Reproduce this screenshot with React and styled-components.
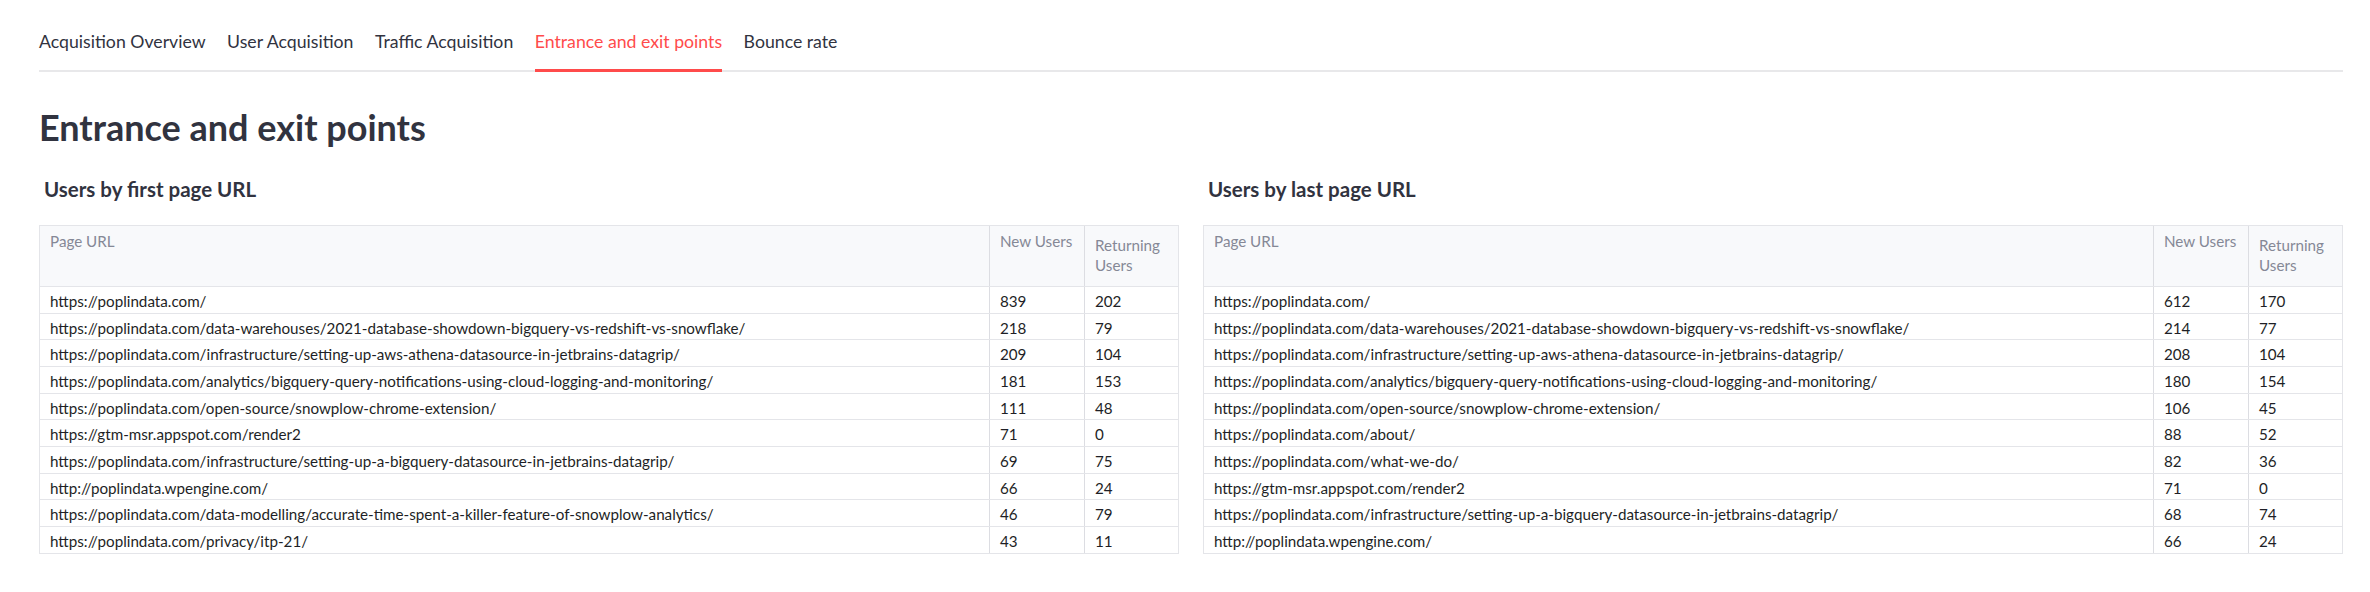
import React from 'react';
import styled, { createGlobalStyle } from 'styled-components';

const GlobalStyle = createGlobalStyle`
  html, body {
    margin: 0;
    padding: 0;
    background: #ffffff;
  }
  body {
    font-family: "Source Sans Pro", Lato, "Noto Sans", sans-serif;
    color: #31333f;
  }
  * {
    box-sizing: border-box;
  }
`;

const Page = styled.div`
  padding: 30px 27px 0 39px;
`;

const TabList = styled.div`
  display: flex;
  gap: 21.5px;
  border-bottom: 2px solid #e8e8ea;
`;

const Tab = styled.div`
  font-size: 17.7px;
  line-height: 24px;
  padding-bottom: 15px;
  margin-bottom: -2px;
  color: ${({ active }) => (active ? '#ff4b4b' : '#31333f')};
  border-bottom: 3px solid ${({ active }) => (active ? '#ff4b4b' : 'transparent')};
  white-space: nowrap;
  cursor: pointer;
`;

const Title = styled.h1`
  margin: 34px 0 0 0;
  font-size: 36px;
  line-height: 1.2;
  font-weight: 700;
  color: #31333f;
`;

const Columns = styled.div`
  display: grid;
  grid-template-columns: 1fr 1fr;
  gap: 24px;
  margin-top: 28px;
`;

const Section = styled.section`
  min-width: 0;
`;

const SectionTitle = styled.h3`
  margin: 0 0 22px 5px;
  font-size: 20.5px;
  line-height: 25.7px;
  font-weight: 700;
  color: #31333f;
`;

const Table = styled.div`
  border: 1px solid #e4e5e9;
  border-bottom: none;
  font-size: 15.2px;
`;

const HeaderRow = styled.div`
  display: grid;
  grid-template-columns: 1fr 95px 94px;
  height: 61px;
  background: #f8f9fb;
  border-bottom: 1px solid #e4e5e9;
`;

const HeaderCell = styled.div`
  padding: ${({ $wrap }) => ($wrap ? '9px' : '5px')} 10px 0 10px;
  line-height: 20px;
  color: #858896;
  border-left: ${({ $first }) => ($first ? 'none' : '1px solid #dcdde2')};
  overflow: hidden;
`;

const Row = styled.div`
  display: grid;
  grid-template-columns: 1fr 95px 94px;
  height: 26.7px;
  border-bottom: 1px solid #e4e5e9;
`;

const Cell = styled.div`
  padding: 1px 10px 0 10px;
  line-height: 26px;
  color: #1e1f26;
  white-space: nowrap;
  overflow: hidden;
  border-left: ${({ $first }) => ($first ? 'none' : '1px solid #dcdde2')};
`;

const tabs = [
  'Acquisition Overview',
  'User Acquisition',
  'Traffic Acquisition',
  'Entrance and exit points',
  'Bounce rate',
];

const firstPages = [
  ['https://poplindata.com/', 839, 202],
  ['https://poplindata.com/data-warehouses/2021-database-showdown-bigquery-vs-redshift-vs-snowflake/', 218, 79],
  ['https://poplindata.com/infrastructure/setting-up-aws-athena-datasource-in-jetbrains-datagrip/', 209, 104],
  ['https://poplindata.com/analytics/bigquery-query-notifications-using-cloud-logging-and-monitoring/', 181, 153],
  ['https://poplindata.com/open-source/snowplow-chrome-extension/', 111, 48],
  ['https://gtm-msr.appspot.com/render2', 71, 0],
  ['https://poplindata.com/infrastructure/setting-up-a-bigquery-datasource-in-jetbrains-datagrip/', 69, 75],
  ['http://poplindata.wpengine.com/', 66, 24],
  ['https://poplindata.com/data-modelling/accurate-time-spent-a-killer-feature-of-snowplow-analytics/', 46, 79],
  ['https://poplindata.com/privacy/itp-21/', 43, 11],
];

const lastPages = [
  ['https://poplindata.com/', 612, 170],
  ['https://poplindata.com/data-warehouses/2021-database-showdown-bigquery-vs-redshift-vs-snowflake/', 214, 77],
  ['https://poplindata.com/infrastructure/setting-up-aws-athena-datasource-in-jetbrains-datagrip/', 208, 104],
  ['https://poplindata.com/analytics/bigquery-query-notifications-using-cloud-logging-and-monitoring/', 180, 154],
  ['https://poplindata.com/open-source/snowplow-chrome-extension/', 106, 45],
  ['https://poplindata.com/about/', 88, 52],
  ['https://poplindata.com/what-we-do/', 82, 36],
  ['https://gtm-msr.appspot.com/render2', 71, 0],
  ['https://poplindata.com/infrastructure/setting-up-a-bigquery-datasource-in-jetbrains-datagrip/', 68, 74],
  ['http://poplindata.wpengine.com/', 66, 24],
];

const UrlTable = ({ title, rows }) => (
  <Section>
    <SectionTitle>{title}</SectionTitle>
    <Table>
      <HeaderRow>
        <HeaderCell $first>Page URL</HeaderCell>
        <HeaderCell>New Users</HeaderCell>
        <HeaderCell $wrap>Returning Users</HeaderCell>
      </HeaderRow>
      {rows.map(([url, newUsers, returning]) => (
        <Row key={url}>
          <Cell $first>{url}</Cell>
          <Cell>{newUsers}</Cell>
          <Cell>{returning}</Cell>
        </Row>
      ))}
    </Table>
  </Section>
);

const App = () => {
  return (
    <Page>
      <GlobalStyle />
      <TabList>
        {tabs.map((t) => (
          <Tab key={t} active={t === 'Entrance and exit points'}>{t}</Tab>
        ))}
      </TabList>
      <Title>Entrance and exit points</Title>
      <Columns>
        <UrlTable title="Users by first page URL" rows={firstPages} />
        <UrlTable title="Users by last page URL" rows={lastPages} />
      </Columns>
    </Page>
  );
};

export default App;
